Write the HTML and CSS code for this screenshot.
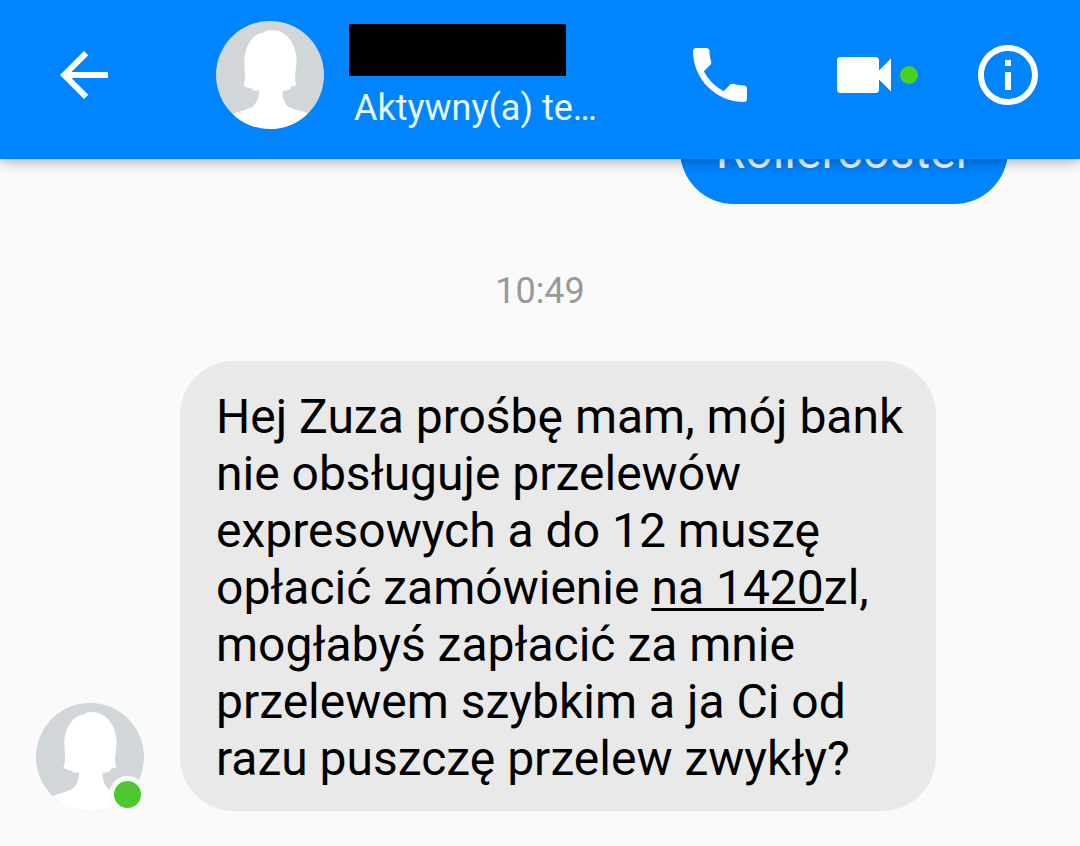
FILE: index.html
```
<!DOCTYPE html>
<html lang="pl">
<head>
  <meta charset="utf-8">
  <title>Messenger</title>
  <link rel="stylesheet" href="styles.css">
</head>
<body>
  <header class="topbar">
    <button type="button" class="icon-btn back" aria-label="Wstecz">
      <svg viewBox="0 0 24 24"><path d="M20 11H7.83l5.59-5.59L12 4l-8 8 8 8 1.41-1.41L7.83 13H20v-2z"/></svg>
    </button>

    <div class="avatar">
      <svg class="person" viewBox="0 0 324 324">
        <path d="M142 35C150 29 158 27 167 27C210 27 240 66 242 117C242 145 232 165 241 192C236 196 229 195 224 197C226 201 221 205 216 207C211 210 206 207 200 210C199 226 202 241 214 255C228 265 250 268 272 275L324 324H0L55 277C76 269 99 265 112 255C125 242 130 225 129 207C122 210 116 209 107 208L112 203C101 203 91 200 82 194C91 176 85 145 85 117C87 75 111 36 142 35Z"/>
      </svg>
    </div>

    <div class="contact">
      <div class="name"></div>
      <div class="status">Aktywny(a) te…</div>
    </div>

    <nav class="actions">
      <button type="button" class="icon-btn" aria-label="Zadzwoń">
        <svg viewBox="0 0 24 24"><path d="M6.62 10.79c1.44 2.83 3.76 5.14 6.59 6.59l2.2-2.2c.27-.27.67-.36 1.02-.24 1.12.37 2.33.57 3.57.57.55 0 1 .45 1 1V20c0 .55-.45 1-1 1-9.39 0-17-7.61-17-17 0-.55.45-1 1-1h3.5c.55 0 1 .45 1 1 0 1.25.2 2.45.57 3.57.11.35.03.74-.25 1.02l-2.2 2.2z"/></svg>
      </button>
      <button type="button" class="icon-btn" aria-label="Rozmowa wideo">
        <svg viewBox="0 0 24 24"><path d="M17 10.5V7c0-.55-.45-1-1-1H4c-.55 0-1 .45-1 1v10c0 .55.45 1 1 1h12c.55 0 1-.45 1-1v-3.5l4 4v-11l-4 4z"/></svg>
        <span class="video-dot"></span>
      </button>
      <button type="button" class="icon-btn" aria-label="Informacje">
        <svg viewBox="0 0 24 24"><path d="M11 17h2v-6h-2v6zm1-15C6.48 2 2 6.48 2 12s4.48 10 10 10 10-4.48 10-10S17.52 2 12 2zm0 18c-4.41 0-8-3.59-8-8s3.59-8 8-8 8 3.59 8 8-3.59 8-8 8zM11 9h2V7h-2v2z"/></svg>
      </button>
    </nav>
  </header>

  <main class="chat">
    <div class="row sent">
      <div class="bubble">Rollercoster</div>
    </div>

    <div class="time">10:49</div>

    <div class="row received">
      <div class="avatar">
        <svg class="person" viewBox="0 0 324 324">
          <path d="M142 35C150 29 158 27 167 27C210 27 240 66 242 117C242 145 232 165 241 192C236 196 229 195 224 197C226 201 221 205 216 207C211 210 206 207 200 210C199 226 202 241 214 255C228 265 250 268 272 275L324 324H0L55 277C76 269 99 265 112 255C125 242 130 225 129 207C122 210 116 209 107 208L112 203C101 203 91 200 82 194C91 176 85 145 85 117C87 75 111 36 142 35Z"/>
        </svg>
        <span class="online"></span>
      </div>
      <div class="bubble">Hej Zuza prośbę mam, mój bank nie obsługuje przelewów expresowych a do 12 muszę opłacić zamówienie <a href="#">na 1420</a>zl, mogłabyś zapłacić za mnie przelewem szybkim a ja Ci od razu puszczę przelew zwykły?</div>
    </div>
  </main>
</body>
</html>
```
FILE: styles.css
```
* {
  box-sizing: border-box;
}

body {
  margin: 0;
  background-color: #fafafa;
  font-family: Roboto, sans-serif;
  color: #000;
}

.topbar {
  position: sticky;
  top: 0;
  z-index: 2;
  display: flex;
  align-items: center;
  padding: 21px 36px 30px 48px;
  background-color: #0084ff;
  box-shadow: 0 3px 12px rgba(0, 0, 0, 0.3);
}

.icon-btn {
  position: relative;
  width: 72px;
  height: 72px;
  padding: 0;
  border: none;
  background: none;
  cursor: pointer;
}

.icon-btn svg {
  display: block;
  width: 100%;
  fill: #fff;
}

.back {
  margin-right: 96px;
}

.avatar {
  position: relative;
  flex: none;
  width: 108px;
  height: 108px;
}

.person {
  display: block;
  border-radius: 50%;
  background-color: #d1d6d9;
  fill: #fff;
}

.contact {
  flex: 1;
  align-self: flex-start;
  min-width: 0;
  padding: 3px 0 0 25px;
}

.name {
  width: 217px;
  height: 52px;
  margin-bottom: 11px;
  background-color: #000;
}

.status {
  padding-left: 5px;
  font-size: 36px;
  line-height: 42px;
  color: #e8f8ff;
  white-space: nowrap;
}

.actions {
  display: flex;
  gap: 72px;
}

.video-dot {
  position: absolute;
  top: 27px;
  left: 72px;
  width: 18px;
  height: 18px;
  border-radius: 50%;
  background-color: #4cd01f;
}

/* the older messages slide under the top bar */
.chat {
  margin-top: -63px;
  padding: 0 72px 35px 36px;
}

.row {
  display: flex;
  align-items: flex-end;
  gap: 36px;
}

.sent {
  justify-content: flex-end;
}

.bubble {
  padding: 27px 36px 24px;
  border-radius: 54px;
  font-size: 48px;
  line-height: 57px;
}

.sent .bubble {
  background-color: #0084ff;
  color: #f0faff;
}

.received .bubble {
  flex: 0 1 756px;
  padding-right: 30px;
  background-color: #e9e9e9;
}

.bubble a {
  color: inherit;
  text-decoration-thickness: 3px;
  text-underline-offset: 4px;
  text-decoration-skip-ink: none;
}

.time {
  margin: 66px -36px 49px 0;
  text-align: center;
  font-size: 36px;
  line-height: 42px;
  color: #999;
}

.online {
  position: absolute;
  right: -2px;
  bottom: -2px;
  width: 37px;
  height: 37px;
  border: 5px solid #fafafa;
  border-radius: 50%;
  background-color: #4fc82e;
}
```
